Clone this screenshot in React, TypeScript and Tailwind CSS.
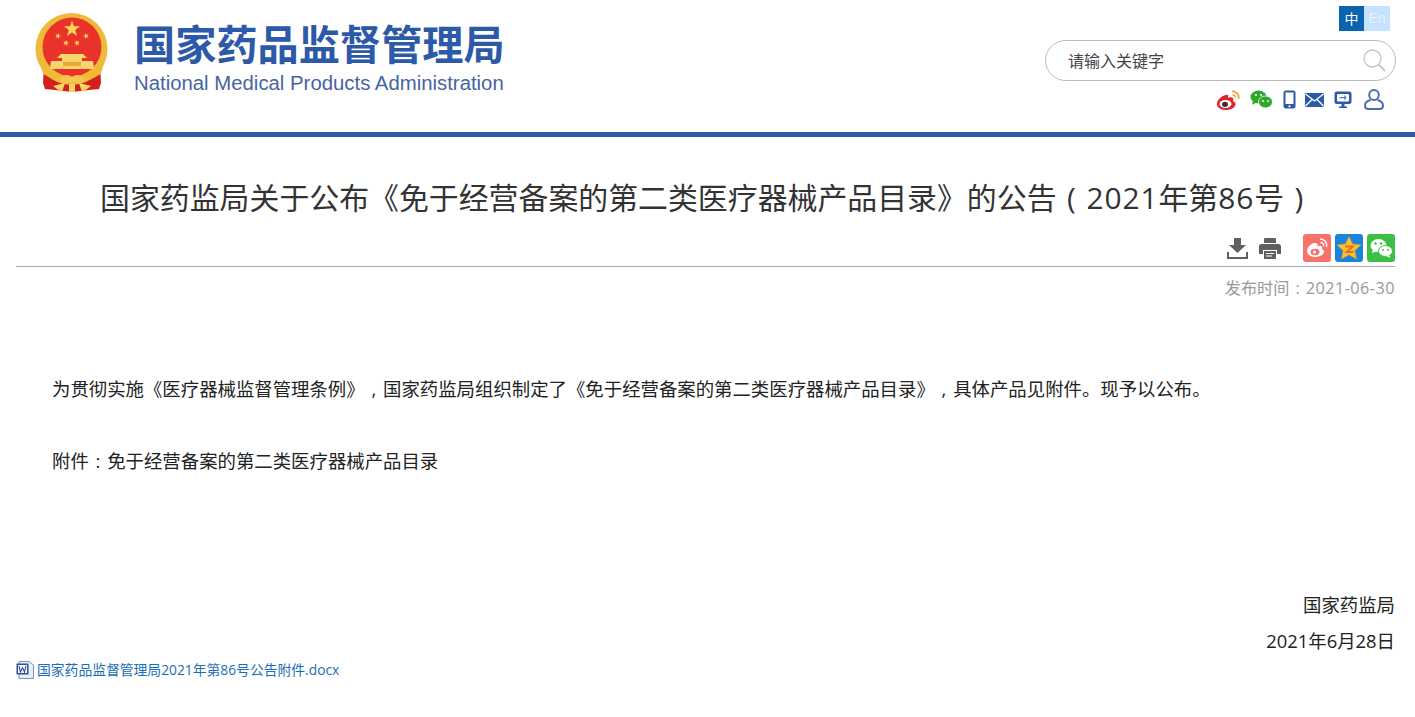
import { FC } from "react";

const Star: FC<{ x: number; y: number; r: number; rot?: number }> = ({ x, y, r, rot = 0 }) => {
  const pts = Array.from({ length: 10 }, (_, i) => {
    const a = (Math.PI / 5) * i - Math.PI / 2;
    const rr = i % 2 === 0 ? r : r * 0.4;
    return `${(x + rr * Math.cos(a)).toFixed(2)},${(y + rr * Math.sin(a)).toFixed(2)}`;
  }).join(" ");
  return <polygon points={pts} fill="#fbd35a" transform={`rotate(${rot} ${x} ${y})`} />;
};

const Emblem: FC = () => (
  <svg width="74" height="80" viewBox="0 0 74 80" className="shrink-0">
    <path d="M9 50 L8 70 L10 76 L20 77 L37 79 L54 77 L64 76 L66 70 L65 50 Z" fill="#d4201c" />
    <circle cx="36.500" cy="36" r="36" fill="#efb93a" />
    <circle cx="37" cy="34" r="29.500" fill="#e9322a" />
    <Star x={37} y={16} r={8.500} />
    <Star x={23} y={23} r={3.200} rot={20} />
    <Star x={51} y={23} r={3.200} rot={-20} />
    <Star x={31} y={30} r={3.200} rot={10} />
    <Star x={42} y={30} r={3.200} rot={-10} />
    <path d="M26 41 H48 L52 45 H47 V48 H58 L59 56 H15 L16 48 H27 V45 H22 Z" fill="#f8d56a" />
    <path d="M28 49 H46 V53 H28 Z" fill="#e9a93a" />
    <path d="M6 53 Q37 77 68 53 L66 61 Q37 79 8 61 Z" fill="#efb93a" />
    <path d="M24 67 Q30 59 37 64 Q44 59 50 67 L46 71 Q37 67 28 71 Z" fill="#f3c651" />
    <path d="M18 73 L30 70 L27 79 L22 76 Z M56 73 L44 70 L47 79 L52 76 Z M34 71 H40 V79 H34 Z" fill="#f7d465" />
  </svg>
);

const WeiboRed: FC = () => (
  <svg width="25" height="20" viewBox="0 0 25 20">
    <path d="M10 5 C5 6 1 10 1 14 C1 17.500 5 20 10 20 C16 20 20 16.500 19.500 13.500 C19 11.500 17 11.500 17 11 C18 8.500 17 7 14 7.200 C13 7.300 12 8 12 7.500 C12.500 5 12 4.500 10 5 Z" fill="#e0242a" />
    <ellipse cx="9.500" cy="14" rx="6" ry="4" fill="#fff" />
    <ellipse cx="9" cy="14.300" rx="3" ry="2.600" fill="#333" />
    <path d="M16 1.500 C20 1 23.500 4.500 22.500 9" fill="none" stroke="#f0a53a" strokeWidth="1.800" />
    <path d="M16.500 5 C18.500 4.800 19.800 6.200 19.400 8.300" fill="none" stroke="#f0a53a" strokeWidth="1.500" />
  </svg>
);

const WechatGreen: FC = () => (
  <svg width="23" height="19" viewBox="0 0 23 19">
    <ellipse cx="8.500" cy="7" rx="8" ry="6.500" fill="#2fa82c" />
    <path d="M3 11 L2 15 L7 12 Z" fill="#2fa82c" />
    <ellipse cx="15.500" cy="12" rx="7" ry="6" fill="#2fa82c" stroke="#fff" strokeWidth="0.800" />
    <circle cx="6" cy="5" r="1.100" fill="#fff" />
    <circle cx="11" cy="5" r="1.100" fill="#fff" />
    <circle cx="13" cy="11" r="0.900" fill="#fff" />
    <circle cx="18" cy="11" r="0.900" fill="#fff" />
  </svg>
);

const Phone: FC = () => (
  <svg width="13" height="19" viewBox="0 0 13 19">
    <rect x="0.500" y="0.500" width="12" height="18" rx="2.500" fill="#2d5aa8" />
    <rect x="2.500" y="2.500" width="8" height="11.500" fill="#fff" />
    <circle cx="6.500" cy="16.300" r="1.100" fill="#fff" />
  </svg>
);

const Mail: FC = () => (
  <svg width="19" height="14" viewBox="0 0 19 14">
    <rect width="19" height="14" rx="1" fill="#2d5aa8" />
    <path d="M0.500 1 L9.500 8 L18.500 1 M0.500 13 L7 6.500 M18.500 13 L12 6.500" fill="none" stroke="#fff" strokeWidth="1.300" />
  </svg>
);

const Monitor: FC = () => (
  <svg width="18" height="18" viewBox="0 0 18 18">
    <rect x="0.500" y="0.500" width="17" height="12.500" rx="2.500" fill="#2d5aa8" />
    <rect x="3" y="3" width="12" height="7.500" rx="1" fill="#fff" />
    <path d="M5.500 6.700 H12 M10 4.700 L12.200 6.700 L10 8.700" fill="none" stroke="#2d5aa8" strokeWidth="1" />
    <path d="M7.500 13 H10.500 V15.500 H13 V17 H5 V15.500 H7.500 Z" fill="#2d5aa8" />
  </svg>
);

const User: FC = () => (
  <svg width="20" height="21" viewBox="0 0 20 21" fill="none" stroke="#4d6cb0" strokeWidth="2">
    <ellipse cx="10" cy="6" rx="4.800" ry="5" />
    <path d="M6.500 11 C3 12 1 14 1 16.500 C1 18.800 2.500 20 4.500 20 H15.500 C17.500 20 19 18.800 19 16.500 C19 14 17 12 13.500 11" />
  </svg>
);

const SearchIcon: FC = () => (
  <svg width="23" height="23" viewBox="0 0 23 23" fill="none" stroke="#c4c4c4">
    <circle cx="9.500" cy="9.500" r="8.500" strokeWidth="1.300" />
    <path d="M15.500 15.500 L22 22" strokeWidth="2" />
  </svg>
);

const Download: FC = () => (
  <svg width="21" height="21" viewBox="0 0 21 21" fill="#606060">
    <path d="M7 0 H14 V7 H19 L10.500 15 L2 7 H7 Z" />
    <path d="M0 14 H2 V19 H19 V14 H21 V21 H0 Z" />
  </svg>
);

const Printer: FC = () => (
  <svg width="22" height="21" viewBox="0 0 22 21">
    <path d="M5 1 Q5 0 6 0 H16 Q17 0 17 1 V5 H5 Z" fill="#606060" />
    <path d="M2.500 6 H19.500 Q22 6 22 8.500 V16 H18 V12 H4 V16 H0 V8.500 Q0 6 2.500 6 Z" fill="#606060" />
    <path d="M5 13 H17 V21 H5 Z" fill="#606060" />
    <path d="M7 15.500 H15 M7 18 H13" stroke="#fff" strokeWidth="1.200" />
  </svg>
);

const ShareWeibo: FC = () => (
  <svg width="28" height="28" viewBox="0 0 28 28">
    <rect width="28" height="28" rx="3" fill="#f8726b" />
    <path d="M11 9 C7 10 4 14 4 17 C4 20.500 8 23 12 23 C18 23 21.500 19.500 21 17 C20.600 15.500 19 15.500 19 15 C20 12.500 18.500 11.500 16 12 C15 12.200 14.500 12.500 14.500 12 C15 9.500 13.500 8.500 11 9 Z" fill="#fff" />
    <ellipse cx="12" cy="18" rx="4.500" ry="3.200" fill="#f8726b" />
    <circle cx="11.500" cy="18" r="1.500" fill="#fff" />
    <path d="M17 5 C21.500 5 24.500 8.500 23.500 13" fill="none" stroke="#fff" strokeWidth="1.500" />
    <path d="M17.500 8.500 C19.800 8.500 21 10 20.500 12" fill="none" stroke="#fff" strokeWidth="1.300" />
  </svg>
);

const ShareQzone: FC = () => (
  <svg width="28" height="28" viewBox="0 0 28 28">
    <rect width="28" height="28" rx="3" fill="#1c84dc" />
    <path d="M14 2.500 L17.500 10 L26 11 L19.800 16.500 L21.500 25 L14 20.800 L6.500 25 L8.200 16.500 L2 11 L10.500 10 Z" fill="#fbc02d" stroke="#e89b1c" strokeWidth="0.600" />
    <path d="M10 12.500 H18 L11.500 18 H18.500" fill="none" stroke="#e8701c" strokeWidth="1.800" />
  </svg>
);

const ShareWechat: FC = () => (
  <svg width="28" height="28" viewBox="0 0 28 28">
    <rect width="28" height="28" rx="3" fill="#3dbf45" />
    <ellipse cx="11.500" cy="11.500" rx="8" ry="6.500" fill="#fff" />
    <path d="M6 15 L5 19 L10 17 Z" fill="#fff" />
    <ellipse cx="18.500" cy="17" rx="7" ry="5.500" fill="#fff" stroke="#3dbf45" strokeWidth="1" />
    <path d="M22 21 L23.500 24 L19 22 Z" fill="#fff" />
    <circle cx="8.500" cy="9.500" r="1.200" fill="#3dbf45" />
    <circle cx="14" cy="9.500" r="1.200" fill="#3dbf45" />
    <circle cx="16" cy="16" r="1" fill="#3dbf45" />
    <circle cx="21" cy="16" r="1" fill="#3dbf45" />
  </svg>
);

const WordIcon: FC = () => (
  <svg width="18" height="18" viewBox="0 0 18 18" className="shrink-0">
    <path d="M3 0.500 H13 L17.500 4 V17.500 H3 Z" fill="#e8eef8" stroke="#7f93b8" />
    <rect x="0.500" y="2.500" width="12" height="11" fill="#2f4f9e" />
    <rect x="2" y="4" width="9" height="8" fill="#fff" />
    <path d="M3 5 L4.500 11 L6.500 6.500 L8.500 11 L10 5" fill="none" stroke="#2f4f9e" strokeWidth="1.100" />
  </svg>
);

// full-width box with the mark centred, as the page's font draws it
const P: FC<{ c: string }> = ({ c }) => <span className="inline-block w-[1em] text-center indent-0">{c}</span>;
const Num: FC<{ c: string }> = ({ c }) => <span className="tracking-[0.03em]">{c}</span>;

const App: FC = () => {
  return (
    <div className="w-[1415px] h-[717px] overflow-hidden bg-white text-[#333] font-['Open_Sans','Noto_Sans_CJK_SC',sans-serif]">
      <header className="h-[137px] border-b-[5px] border-[#2d5aa8] pl-[35px] pr-[19px] flex justify-between">
        <div className="flex items-start pt-[13px]">
          <Emblem />
          <div className="ml-[25px] -mt-[1px] text-[#2d5aa8]">
            <div className="text-[41.200px] leading-[60px] font-bold whitespace-nowrap font-['Noto_Sans_CJK_SC',sans-serif]">国家药品监督管理局</div>
            <div className="text-[20.350px] leading-[24px] -mt-[1px] font-['Liberation_Sans',sans-serif] text-[#46659f] whitespace-nowrap">National Medical Products Administration</div>
          </div>
        </div>
        <div className="w-[351px] flex flex-col items-end pt-[6px]">
          <div className="flex mr-[6px] h-[25px] text-[14px] leading-[25px] text-center">
            <div className="w-[25px] bg-[#0a62b0] text-white">中</div>
            <div className="w-[26px] bg-[#c5e2ff] text-[#e8f3ff] font-['Liberation_Sans',sans-serif]">En</div>
          </div>
          <div className="mt-[9px] w-full h-[41px] rounded-full border border-[#bbb] flex items-center justify-between pl-[22px] pr-[9px]">
            <span className="text-[16px] leading-[24px] text-[#444]">请输入关键字</span>
            <SearchIcon />
          </div>
          <div className="mt-[8px] mr-[12px] flex items-center">
            <WeiboRed />
            <div className="ml-[9px]"><WechatGreen /></div>
            <div className="ml-[10px]"><Phone /></div>
            <div className="ml-[9px]"><Mail /></div>
            <div className="ml-[10px]"><Monitor /></div>
            <div className="ml-[12px]"><User /></div>
          </div>
        </div>
      </header>

      <main className="pl-[16px] pr-[20px]">
        <h1 className="mt-[39px] pl-[3px] text-[29.900px] leading-[44px] font-normal text-center whitespace-nowrap">
          国家药监局关于公布《免于经营备案的第二类医疗器械产品目录》的公告<P c="(" /><Num c="2021" />年第<Num c="86" />号<P c=")" />
        </h1>
        <div className="mt-[6px] h-[41px] border-b border-[#aaa] flex items-start justify-end pt-[8px]">
          <div className="mt-[4px]"><Download /></div>
          <div className="ml-[11px] mt-[4px]"><Printer /></div>
          <div className="ml-[22px] flex gap-[4px]">
            <ShareWeibo />
            <ShareQzone />
            <ShareWechat />
          </div>
        </div>
        <div className="mt-[9px] text-right text-[16.200px] leading-[24px] text-[#999]">发布时间<P c=":" /><Num c="2021-06-30" /></div>
        <div className="mt-[71px] text-[18.400px] leading-[36px] text-[#222]">
          <p className="indent-[36px] whitespace-nowrap">为贯彻实施《医疗器械监督管理条例》<P c="," />国家药监局组织制定了《免于经营备案的第二类医疗器械产品目录》<P c="," />具体产品见附件。现予以公布。</p>
          <p className="mt-[36px] indent-[36px] whitespace-nowrap">附件<P c=":" />免于经营备案的第二类医疗器械产品目录</p>
          <p className="mt-[108px] text-right">国家药监局</p>
          <p className="text-right">2021年6月28日</p>
        </div>
        <a className="mt-[1px] flex items-center gap-[3px] text-[13.800px] leading-[20px] text-[#1b6fb5] whitespace-nowrap">
          <WordIcon />
          国家药品监督管理局2021年第86号公告附件.docx
        </a>
      </main>
    </div>
  );
};

export default App;
